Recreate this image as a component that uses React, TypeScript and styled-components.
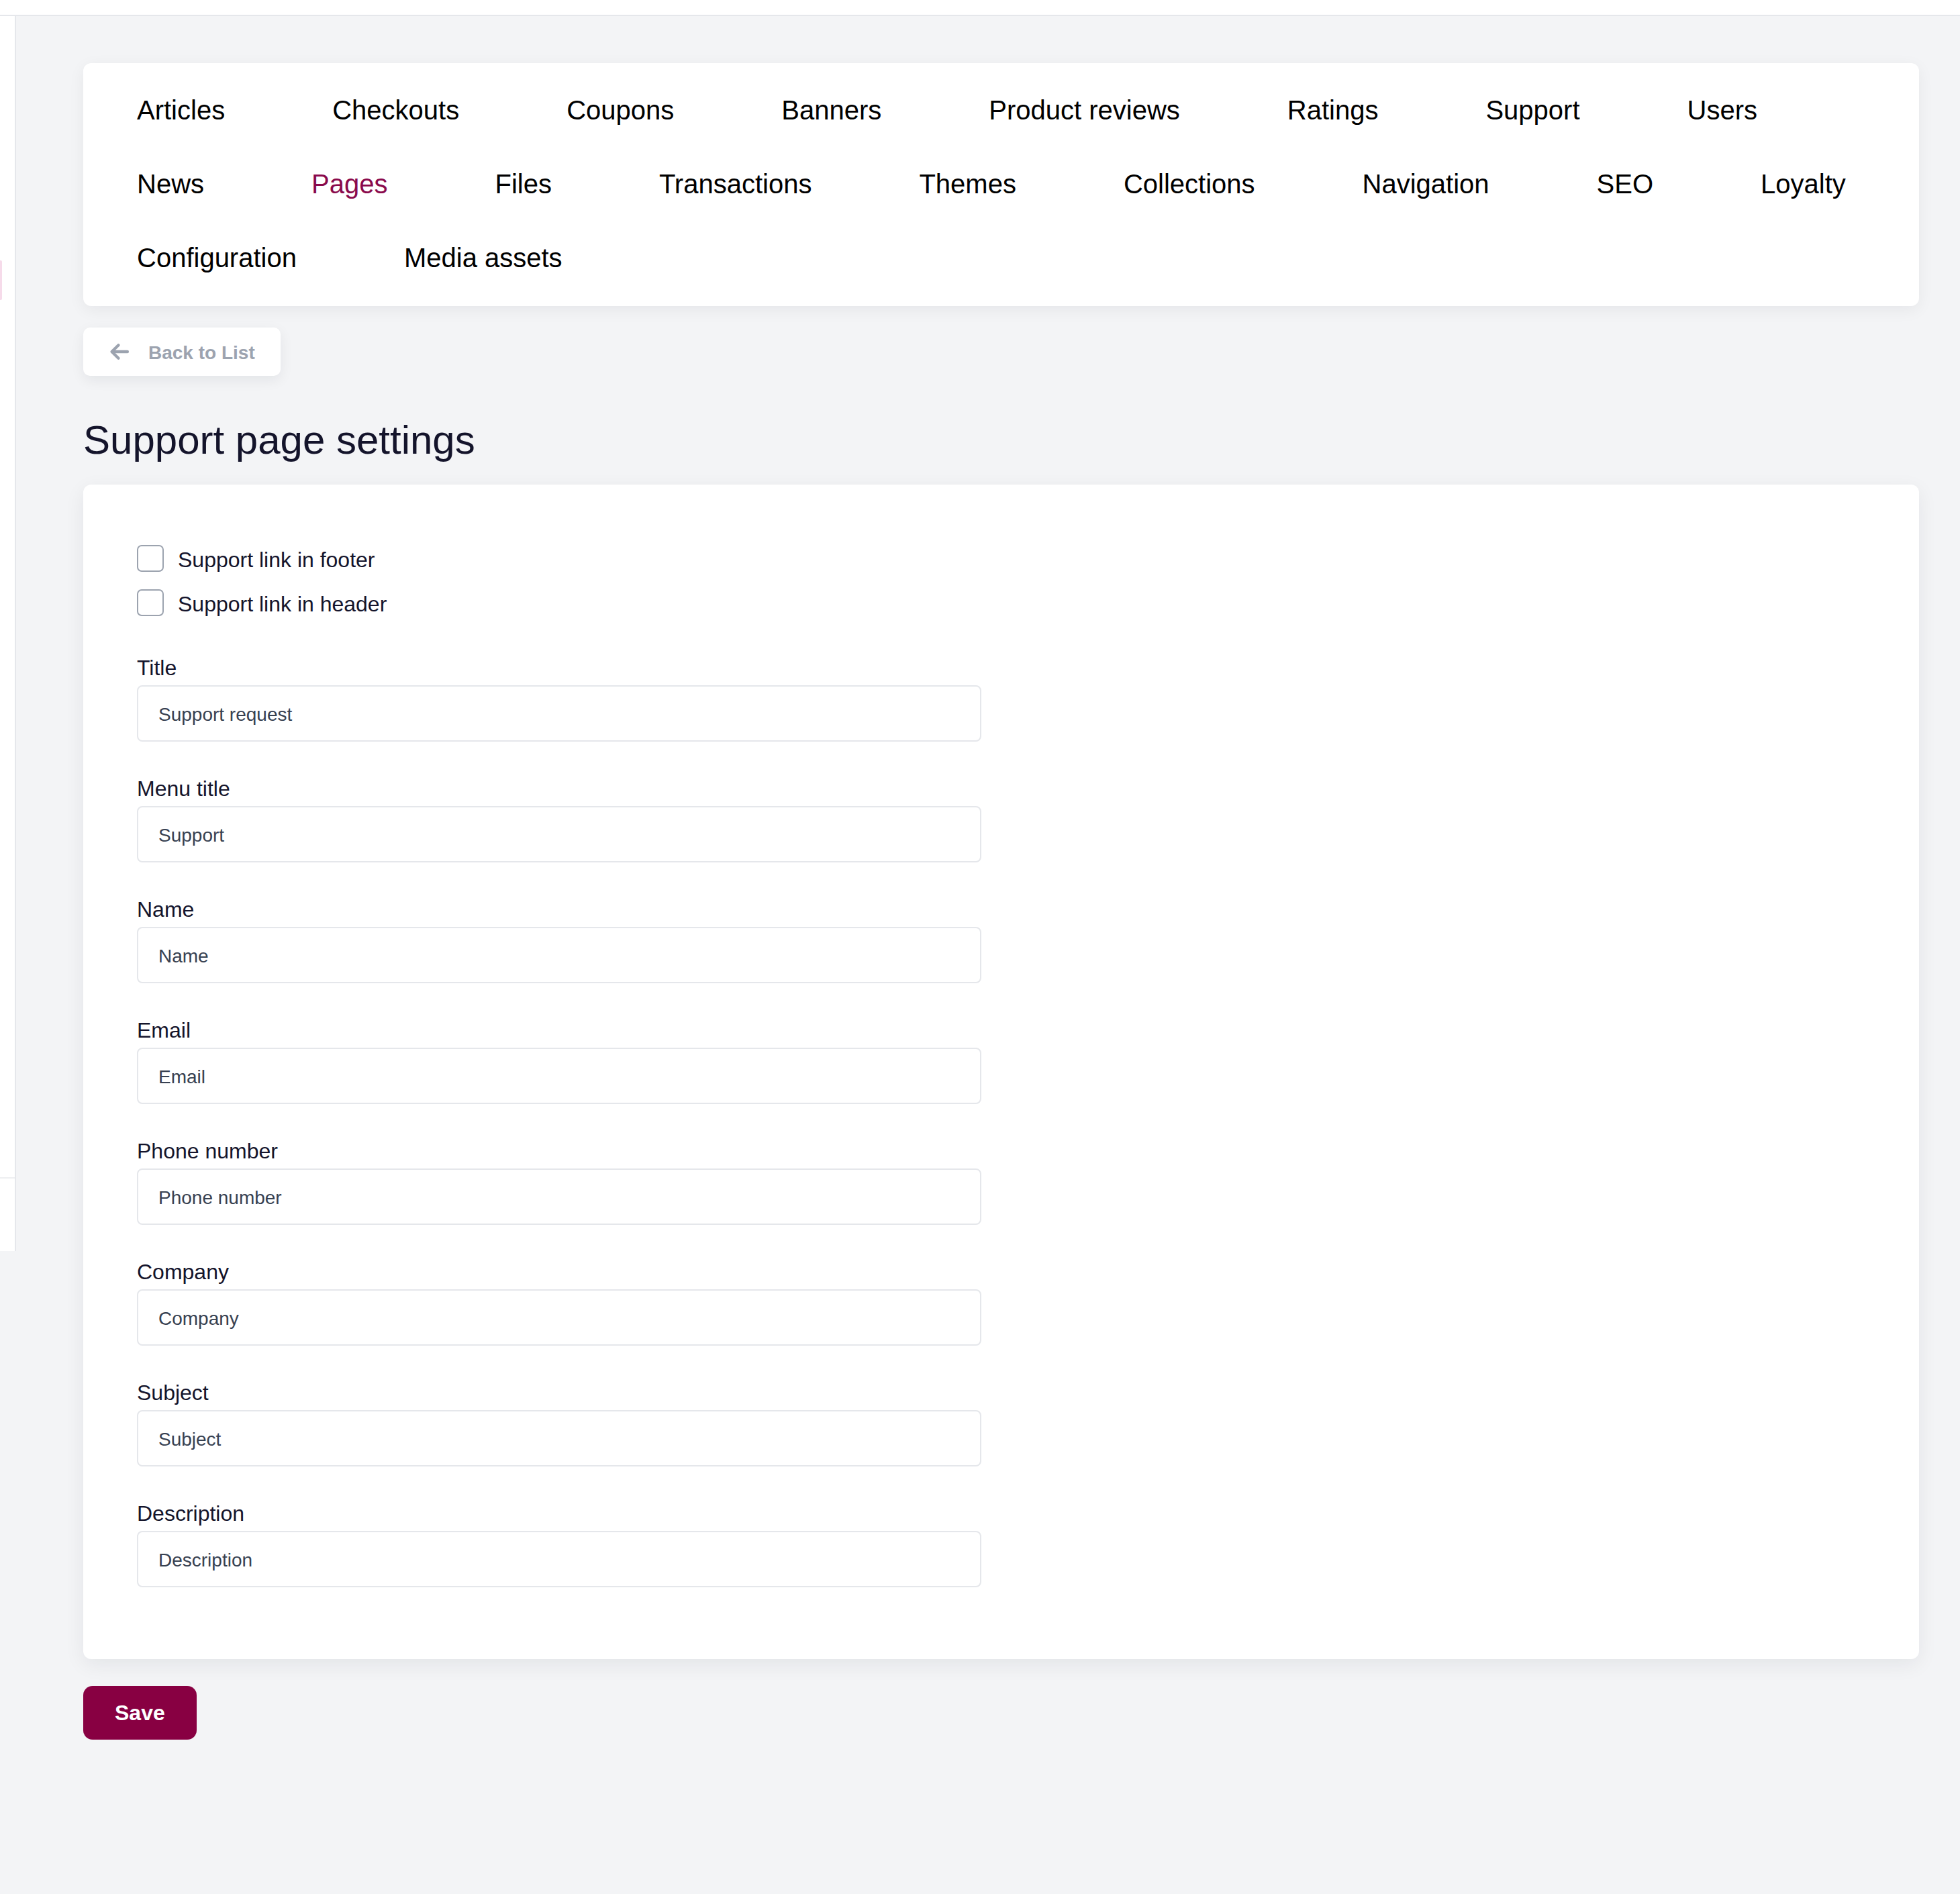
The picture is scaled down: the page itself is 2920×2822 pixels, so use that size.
import React from 'react'
import styled, { createGlobalStyle } from 'styled-components'

const GlobalStyle = createGlobalStyle`
    html, body {
        margin: 0;
        padding: 0;
        background: #f3f4f6;
        font-family: "Liberation Sans", Arial, sans-serif;
    }
    * {
        box-sizing: border-box;
    }
`

const navItems = [
    'Articles', 'Checkouts', 'Coupons', 'Banners', 'Product reviews', 'Ratings', 'Support', 'Users',
    'News', 'Pages', 'Files', 'Transactions', 'Themes', 'Collections', 'Navigation', 'SEO', 'Loyalty',
    'Configuration', 'Media assets',
]

const fields = [
    { label: 'Title', value: 'Support request' },
    { label: 'Menu title', value: 'Support' },
    { label: 'Name', placeholder: 'Name' },
    { label: 'Email', placeholder: 'Email' },
    { label: 'Phone number', placeholder: 'Phone number' },
    { label: 'Company', placeholder: 'Company' },
    { label: 'Subject', placeholder: 'Subject' },
    { label: 'Description', placeholder: 'Description' },
]

const ArrowLeft = () => (
    <svg width="38" height="38" viewBox="0 0 20 20" fill="none" stroke="currentColor" strokeWidth="2.3" strokeLinecap="round" strokeLinejoin="round">
        <path d="M16.25 10H4.2" />
        <path d="M9.2 4.9 4 10l5.2 5.1" />
    </svg>
)

export default function App() {
    return (
        <>
            <GlobalStyle />
            <TopBar />
            <Shell>
                <Sidebar>
                    <ActiveMark />
                    <SidebarSpacer />
                    <SidebarBottom />
                </Sidebar>
                <Main>
                    <NavCard>
                        {navItems.map((item) => (
                            <NavLink key={item} $active={item === 'Pages'}>{item}</NavLink>
                        ))}
                    </NavCard>
                    <BackButton>
                        <ArrowLeft />
                        <BackText>Back to List</BackText>
                    </BackButton>
                    <Heading>Support page settings</Heading>
                    <FormCard>
                        <CheckList>
                            <CheckRow>
                                <Checkbox type="checkbox" />
                                <CheckText>Support link in footer</CheckText>
                            </CheckRow>
                            <CheckRow>
                                <Checkbox type="checkbox" />
                                <CheckText>Support link in header</CheckText>
                            </CheckRow>
                        </CheckList>
                        <Fields>
                            {fields.map((f) => (
                                <Field key={f.label}>
                                    <FieldLabel>{f.label}</FieldLabel>
                                    <TextInput defaultValue={f.value} placeholder={f.placeholder} />
                                </Field>
                            ))}
                        </Fields>
                    </FormCard>
                    <SaveButton>Save</SaveButton>
                </Main>
            </Shell>
        </>
    )
}

const TopBar = styled.header`
    height: 24px;
    background: #ffffff;
    border-bottom: 2px solid #e5e7eb;
`
const Shell = styled.div`
    display: flex;
    align-items: flex-start;
`
const Sidebar = styled.aside`
    width: 24px;
    height: 1840px;
    flex-shrink: 0;
    background: #ffffff;
    border-right: 2px solid #e5e7eb;
    display: flex;
    flex-direction: column;
`
const ActiveMark = styled.div`
    margin-top: 364px;
    width: 3px;
    height: 59px;
    background: #f6dbea;
    border-radius: 0 2px 2px 0;
`
const SidebarSpacer = styled.div`
    flex: 1;
`
const SidebarBottom = styled.div`
    height: 110px;
    border-top: 2px solid #eeeff1;
`
const Main = styled.main`
    flex: 1;
    padding: 70px 61px 0 100px;
    display: flex;
    flex-direction: column;
    align-items: flex-start;
`
const NavCard = styled.nav`
    align-self: stretch;
    background: #ffffff;
    border-radius: 12px;
    box-shadow: 0 6px 24px rgba(17, 24, 39, 0.06);
    padding: 40px 80px 42px;
    display: flex;
    flex-wrap: wrap;
    column-gap: 160px;
    row-gap: 50px;
`
const NavLink = styled.a<{ $active?: boolean }>`
    font-size: 40px;
    line-height: 60px;
    color: ${(p) => (p.$active ? '#8a0a4c' : '#000000')};
    cursor: pointer;
    white-space: nowrap;
`
const BackButton = styled.button`
    margin-top: 32px;
    height: 72px;
    padding: 0 38px 0 35px;
    display: flex;
    align-items: center;
    gap: 24px;
    border: none;
    border-radius: 10px;
    background: #ffffff;
    box-shadow: 0 6px 20px rgba(17, 24, 39, 0.07);
    color: #9ca3af;
    font-family: "Liberation Sans", Arial, sans-serif;
    font-size: 28px;
    font-weight: 700;
    cursor: pointer;
`
const BackText = styled.span`
    padding-top: 3px;
`
const Heading = styled.h1`
    margin: 60px 0 30px;
    font-size: 60px;
    line-height: 72px;
    font-weight: 400;
    color: #14142b;
`
const FormCard = styled.section`
    align-self: stretch;
    background: #ffffff;
    border-radius: 12px;
    box-shadow: 0 8px 30px rgba(17, 24, 39, 0.07);
    padding: 90px 80px 107px;
`
const CheckList = styled.div`
    display: flex;
    flex-direction: column;
    gap: 26px;
    margin-bottom: 57px;
`
const CheckRow = styled.label`
    display: flex;
    align-items: center;
    gap: 21px;
    height: 40px;
    font-size: 32px;
    line-height: 40px;
    color: #14142b;
`
const CheckText = styled.span`
    padding-top: 4px;
`
const Checkbox = styled.input`
    appearance: none;
    margin: 0;
    width: 40px;
    height: 40px;
    border: 2px solid #9ca3af;
    border-radius: 7px;
    background: #ffffff;
`
const Fields = styled.div`
    display: flex;
    flex-direction: column;
    gap: 50px;
`
const Field = styled.div`
    display: flex;
    flex-direction: column;
    gap: 6px;
`
const FieldLabel = styled.label`
    font-size: 32px;
    line-height: 40px;
    color: #14142b;
`
const TextInput = styled.input`
    width: 1258px;
    height: 84px;
    padding: 3px 30px 0;
    border: 2px solid #e5e7eb;
    border-radius: 8px;
    background: #ffffff;
    font-family: "Liberation Sans", Arial, sans-serif;
    font-size: 28px;
    color: #374151;
    outline: none;

    &::placeholder {
        color: #374151;
        opacity: 1;
    }
`
const SaveButton = styled.button`
    margin-top: 40px;
    height: 80px;
    padding: 0 47px;
    border: none;
    border-radius: 14px;
    background: #880042;
    color: #ffffff;
    font-family: "Liberation Sans", Arial, sans-serif;
    font-size: 32px;
    font-weight: 700;
    cursor: pointer;
`
